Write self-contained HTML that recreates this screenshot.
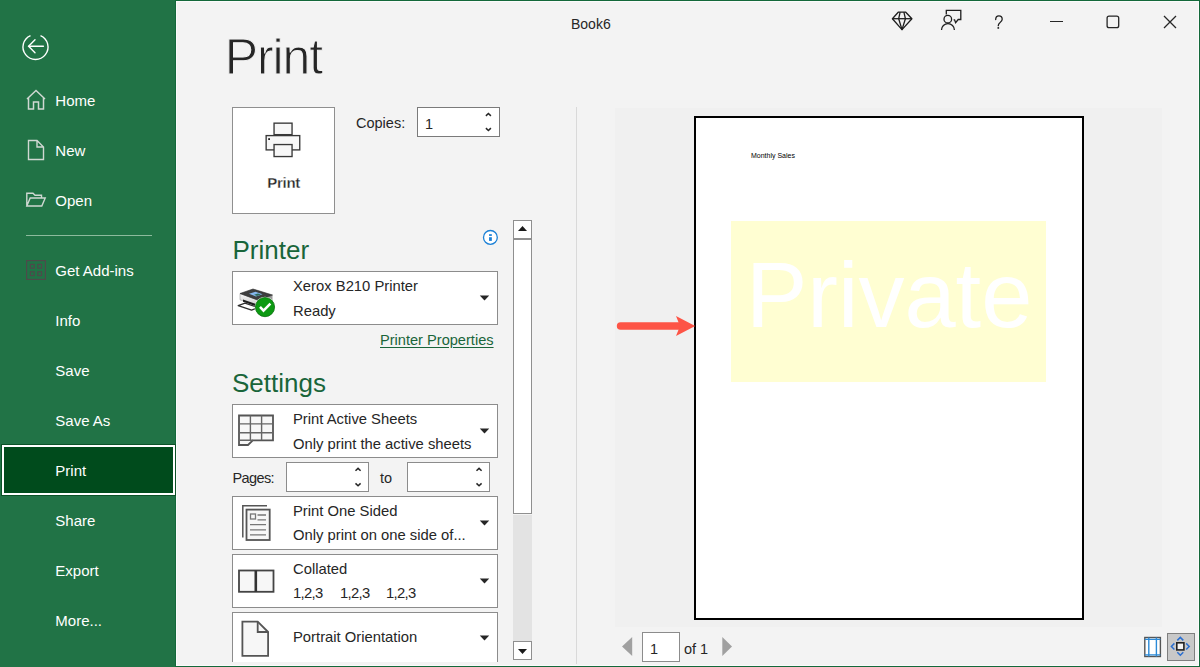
<!DOCTYPE html>
<html><head><meta charset="utf-8"><title>Print</title>
<style>
html,body{margin:0;padding:0;}
body{width:1200px;height:667px;position:relative;overflow:hidden;background:#f3f3f3;font-family:"Liberation Sans", sans-serif;}
.t{position:absolute;white-space:nowrap;font-family:"Liberation Sans", sans-serif;}
.r{position:absolute;}
svg.r{overflow:visible;}
</style></head><body>
<div class="r" style="left:0px;top:0px;width:175px;height:667px;background:#217346"></div>
<div class="r" style="left:175px;top:0px;width:1025px;height:667px;background:#13683a"></div>
<div class="r" style="left:176px;top:1px;width:1023px;height:665px;background:#fbfbfb"></div>
<div class="r" style="left:177px;top:2px;width:1021px;height:663px;background:#f3f3f3"></div>
<svg class="r" style="left:18px;top:30px;" width="36" height="36" viewBox="0 0 36 36"><path d="M 22.5 5.54 A 12.5 12.5 0 1 1 12.5 5.54" fill="none" stroke="#fff" stroke-width="1.4"/><g fill="none" stroke="#fff" stroke-width="1.4" stroke-linecap="round"><path d="M10.8 16.3 H25.4"/><path d="M17 9.8 L10.6 16.3 L17 22.8"/></g></svg>
<div class="r" style="left:1px;top:444px;width:175px;height:52px;background:#0b5127"></div>
<div class="r" style="left:2px;top:445px;width:173px;height:50px;background:#fff"></div>
<div class="r" style="left:4px;top:447px;width:169px;height:46px;background:#004b1c"></div>
<div class="t" style="left:55.3px;top:93.00px;font-size:15px;line-height:15px;color:#fff;">Home</div>
<div class="t" style="left:55.3px;top:143.00px;font-size:15px;line-height:15px;color:#fff;">New</div>
<div class="t" style="left:55.3px;top:193.00px;font-size:15px;line-height:15px;color:#fff;">Open</div>
<div class="t" style="left:55.3px;top:263.00px;font-size:15px;line-height:15px;color:#fff;">Get Add-ins</div>
<div class="t" style="left:55.3px;top:313.00px;font-size:15px;line-height:15px;color:#fff;">Info</div>
<div class="t" style="left:55.3px;top:363.00px;font-size:15px;line-height:15px;color:#fff;">Save</div>
<div class="t" style="left:55.3px;top:413.00px;font-size:15px;line-height:15px;color:#fff;">Save As</div>
<div class="t" style="left:55.3px;top:463.00px;font-size:15px;line-height:15px;color:#fff;">Print</div>
<div class="t" style="left:55.3px;top:513.00px;font-size:15px;line-height:15px;color:#fff;">Share</div>
<div class="t" style="left:55.3px;top:563.00px;font-size:15px;line-height:15px;color:#fff;">Export</div>
<div class="t" style="left:55.3px;top:613.00px;font-size:15px;line-height:15px;color:#fff;">More...</div>
<svg class="r" style="left:24px;top:88px;" width="24" height="24" viewBox="0 0 24 24"><path d="M3 11.5 L12 3 L21 11.5 M4.5 10 V21.5 H9.5 V14.5 H14.5 V21.5 H19.5 V10" fill="none" stroke="#cfd8d2" stroke-width="1.5" transform="translate(0,-0.5)"/></svg>
<svg class="r" style="left:24px;top:138px;" width="24" height="24" viewBox="0 0 24 24"><path d="M4.5 2.5 H13 L19.5 9 V21.5 H4.5 Z M13 2.5 V9 H19.5" fill="none" stroke="#cfd8d2" stroke-width="1.4"/></svg>
<svg class="r" style="left:24px;top:188px;" width="24" height="24" viewBox="0 0 24 24"><path d="M2.8 18 V5.2 H9 L11 7.2 H17.5 V10 M2.8 18 L6.2 10 H21.2 L17.8 18 Z" fill="none" stroke="#cfd8d2" stroke-width="1.4"/></svg>
<div class="r" style="left:26px;top:235px;width:126px;height:1px;background:#8dbb9d"></div>
<svg class="r" style="left:24px;top:258px;" width="24" height="24" viewBox="0 0 24 24"><g fill="none" stroke="#4d4a4a" stroke-width="1.2"><rect x="2.6" y="2.6" width="18.8" height="18.8"/><rect x="6.4" y="6.4" width="3.8" height="3.8"/><rect x="13.8" y="6.4" width="3.8" height="3.8"/><rect x="6.4" y="13.8" width="3.8" height="3.8"/><rect x="13.8" y="13.8" width="3.8" height="3.8"/></g></svg>
<div class="t" style="left:571px;top:17.00px;font-size:14px;line-height:14px;color:#262626;">Book6</div>
<svg class="r" style="left:890px;top:10px;" width="24" height="24" viewBox="0 0 24 24"><g fill="none" stroke="#1e1e1e" stroke-width="1.3" stroke-linejoin="round"><path d="M8.2 2.2 H15.8 L21.9 8.7 L12 19.6 L2.4 8.7 Z"/><path d="M2.4 8.7 H21.9"/><path d="M10.1 2.2 L8.7 8.7 L12 19.6 L15.4 8.7 L13.9 2.2"/></g></svg>
<svg class="r" style="left:938px;top:8px;" width="26" height="26" viewBox="0 0 26 26"><g fill="none" stroke="#1e1e1e" stroke-width="1.3"><path d="M8.3 6.4 V2.4 H22.8 V11.5 H20.2 L17.6 14.6 L16.6 11.8 H15.6"/><circle cx="9.8" cy="11.2" r="3.8"/><path d="M3.5 22 A 6.45 6.45 0 0 1 16.4 22"/></g></svg>
<svg class="r" style="left:990px;top:12px;" width="18" height="20" viewBox="0 0 18 20"><path d="M5.7 7.5 C5.7 5.2 7.1 3.9 8.9 3.9 C10.7 3.9 12.2 5.2 12.2 7.2 C12.2 9.9 8.3 10.8 8.3 13.4 V13.7" fill="none" stroke="#1e1e1e" stroke-width="1.3" stroke-linecap="round"/><circle cx="8.3" cy="15.9" r="0.95" fill="#1e1e1e"/></svg>
<div class="r" style="left:1050px;top:21px;width:13px;height:1px;background:#262626"></div>
<svg class="r" style="left:1104px;top:13px;" width="18" height="18" viewBox="0 0 18 18"><rect x="3.1" y="3.1" width="11.6" height="11.6" rx="2" fill="none" stroke="#262626" stroke-width="1.3"/></svg>
<svg class="r" style="left:1161px;top:13px;" width="18" height="18" viewBox="0 0 18 18"><path d="M3 3 L15 15 M15 3 L3 15" stroke="#262626" stroke-width="1.3"/></svg>
<div class="t" style="left:224.8px;top:32.00px;font-size:50px;line-height:50px;color:#262626;-webkit-text-stroke:1px #f3f3f3;letter-spacing:-1.1px;">Print</div>
<div class="r" style="left:232px;top:107px;width:103px;height:107px;background:#8f8f8f"></div>
<div class="r" style="left:233px;top:108px;width:101px;height:105px;background:#fff"></div>
<svg class="r" style="left:262px;top:119px;" width="42" height="42" viewBox="0 0 42 42"><g fill="#f7f7f7" stroke="#383838" stroke-width="1.35"><rect x="12.05" y="4.15" width="18" height="11.5"/><rect x="4.15" y="16.6" width="33.6" height="14.3"/><rect x="12.05" y="25.55" width="18" height="12"/></g><rect x="6.2" y="19.2" width="1.8" height="1.8" fill="#222"/></svg>
<div class="t" style="left:267.3px;top:175.00px;font-size:15px;line-height:15px;color:#262626;font-weight:bold;letter-spacing:-0.3px;-webkit-text-stroke:0.3px #fff;">Print</div>
<div class="t" style="left:356px;top:116.00px;font-size:14.5px;line-height:14.5px;color:#262626;">Copies:</div>
<div class="r" style="left:417px;top:107px;width:83px;height:30px;background:#7a7a7a"></div>
<div class="r" style="left:418px;top:108px;width:81px;height:28px;background:#fff"></div>
<div class="t" style="left:425px;top:117.00px;font-size:14.5px;line-height:14.5px;color:#262626;">1</div>
<svg class="r" style="left:482px;top:109px;" width="14" height="26" viewBox="0 0 14 26"><g fill="none" stroke="#262626" stroke-width="1.5"><path d="M3.9 6.9 L6.4 4.5 L8.9 6.9"/><path d="M3.9 19.1 L6.4 21.5 L8.9 19.1"/></g></svg>
<div class="r" style="left:576px;top:107px;width:1px;height:557px;background:#d9d9d9"></div>
<div class="t" style="left:232.5px;top:237.00px;font-size:26px;line-height:26px;color:#19653a;">Printer</div>
<svg class="r" style="left:482px;top:229px;" width="17" height="17" viewBox="0 0 17 17"><circle cx="8.4" cy="8.4" r="6.9" fill="#fff" stroke="#1b80d6" stroke-width="1.3"/><rect x="7.05" y="8.2" width="2.8" height="3.7" fill="#1b80d6"/><rect x="7.05" y="5.2" width="2.8" height="1.7" fill="#1b80d6"/></svg>
<div class="r" style="left:232px;top:271px;width:266px;height:54px;background:#8c8c8c"></div>
<div class="r" style="left:233px;top:272px;width:264px;height:52px;background:#fff"></div>
<svg class="r" style="left:479px;top:293px;" width="12" height="10" viewBox="0 0 12 10"><path d="M0.8 2.5 H10.2 L5.5 7.5 Z" fill="#262626"/></svg>
<svg class="r" style="left:236px;top:284px;" width="42" height="34" viewBox="0 0 42 34"><defs><linearGradient id="pf" x1="0" y1="0" x2="0" y2="1"><stop offset="0" stop-color="#fafafa"/><stop offset="1" stop-color="#c8c8c8"/></linearGradient></defs><path d="M4 9.5 L23 16.5 L23 22.5 L4 15.8 Z" fill="url(#pf)" stroke="#9a9a9a" stroke-width="0.6"/><path d="M36.5 11 V16.5 L23 22.5 V16.5 Z" fill="#9c9c9c"/><path d="M4 9.5 L17 5 L36.5 11 L23 16.5 Z" fill="#3e3e3e" stroke="#2a2a2a" stroke-width="0.6"/><path d="M13 9.8 L19.5 7.8 L26.5 10.3 L20 12.6 Z" fill="#86b8ee"/><path d="M18 10.8 L22 9.6 L25 10.6 L21 12 Z" fill="#2f6a5a"/><path d="M7 15.6 L21 20.4 V22.6 L7 17.8 Z" fill="#1e1e1e"/><path d="M2.2 21.6 L9 19.2 L22 23.6 L15.6 26.2 Z" fill="#fff" stroke="#2e2e2e" stroke-width="1.3" stroke-linejoin="round"/><circle cx="29" cy="23.1" r="10.3" fill="#fff"/><circle cx="29" cy="23.1" r="9.6" fill="#0c9a12" stroke="#0a6d0d" stroke-width="0.8"/><path d="M24 22.9 L27.5 26.7 L34.4 19.6" fill="none" stroke="#fff" stroke-width="2.5"/></svg>
<div class="t" style="left:293px;top:279.00px;font-size:14.8px;line-height:14.8px;color:#262626;">Xerox B210 Printer</div>
<div class="t" style="left:293px;top:304.00px;font-size:14.8px;line-height:14.8px;color:#262626;">Ready</div>
<div class="t" style="left:380px;top:333.00px;font-size:14.6px;line-height:14.6px;color:#19653a;text-decoration:underline;text-underline-offset:1.5px;">Printer Properties</div>
<div class="t" style="left:232px;top:370.00px;font-size:26px;line-height:26px;color:#19653a;">Settings</div>
<div class="r" style="left:232px;top:404px;width:266px;height:54px;background:#8c8c8c"></div>
<div class="r" style="left:233px;top:405px;width:264px;height:52px;background:#fff"></div>
<svg class="r" style="left:479px;top:426px;" width="12" height="10" viewBox="0 0 12 10"><path d="M0.8 2.5 H10.2 L5.5 7.5 Z" fill="#262626"/></svg>
<svg class="r" style="left:236px;top:412px;" width="40" height="36" viewBox="0 0 40 36"><g fill="#f7f7f7" stroke="#555" stroke-width="1.8"><path d="M3 3.5 H37 V28.3 H16.8 L12 33 H3 Z"/></g><g stroke="#666" stroke-width="1.4"><path d="M14.4 3.5 V28.3 M25.6 3.5 V28.3 M3 11.9 H37 M3 20.7 H37 M3 28.3 H16.8"/></g></svg>
<div class="t" style="left:293px;top:412.00px;font-size:14.8px;line-height:14.8px;color:#262626;">Print Active Sheets</div>
<div class="t" style="left:293px;top:437.00px;font-size:14.8px;line-height:14.8px;color:#262626;">Only print the active sheets</div>
<div class="t" style="left:232.5px;top:471.00px;font-size:14.5px;line-height:14.5px;color:#262626;letter-spacing:-0.6px;">Pages:</div>
<div class="r" style="left:286px;top:462px;width:83px;height:30px;background:#8c8c8c"></div>
<div class="r" style="left:287px;top:463px;width:81px;height:28px;background:#fff"></div>
<svg class="r" style="left:350.5px;top:464px;" width="14" height="26" viewBox="0 0 14 26"><g fill="none" stroke="#262626" stroke-width="1.5"><path d="M4.5 6.8 L7.05 4.4 L9.6 6.8"/><path d="M4.5 19.4 L7.05 21.8 L9.6 19.4"/></g></svg>
<div class="r" style="left:407px;top:462px;width:83px;height:30px;background:#8c8c8c"></div>
<div class="r" style="left:408px;top:463px;width:81px;height:28px;background:#fff"></div>
<svg class="r" style="left:471.5px;top:464px;" width="14" height="26" viewBox="0 0 14 26"><g fill="none" stroke="#262626" stroke-width="1.5"><path d="M4.5 6.8 L7.05 4.4 L9.6 6.8"/><path d="M4.5 19.4 L7.05 21.8 L9.6 19.4"/></g></svg>
<div class="t" style="left:380px;top:471.00px;font-size:14.5px;line-height:14.5px;color:#262626;">to</div>
<div class="r" style="left:232px;top:496px;width:266px;height:54px;background:#8c8c8c"></div>
<div class="r" style="left:233px;top:497px;width:264px;height:52px;background:#fff"></div>
<svg class="r" style="left:479px;top:518px;" width="12" height="10" viewBox="0 0 12 10"><path d="M0.8 2.5 H10.2 L5.5 7.5 Z" fill="#262626"/></svg>
<svg class="r" style="left:236px;top:500px;" width="40" height="44" viewBox="0 0 40 44"><g fill="none" stroke="#555" stroke-width="1.5"><path d="M6.8 37.4 V5.7 H31"/></g><rect x="10.5" y="9.6" width="23.2" height="30.4" fill="#f7f7f7" stroke="#555" stroke-width="1.8"/><g stroke="#777" stroke-width="1.3"><rect x="14.5" y="14" width="5" height="5" fill="none"/><path d="M21.5 15 H30 M21.5 19.9 H30 M14 24.7 H30 M14 29.8 H30 M14 34.8 H30"/></g></svg>
<div class="t" style="left:293px;top:504.00px;font-size:14.8px;line-height:14.8px;color:#262626;">Print One Sided</div>
<div class="t" style="left:293px;top:528.00px;font-size:14.8px;line-height:14.8px;color:#262626;">Only print on one side of...</div>
<div class="r" style="left:232px;top:554px;width:266px;height:54px;background:#8c8c8c"></div>
<div class="r" style="left:233px;top:555px;width:264px;height:52px;background:#fff"></div>
<svg class="r" style="left:479px;top:576px;" width="12" height="10" viewBox="0 0 12 10"><path d="M0.8 2.5 H10.2 L5.5 7.5 Z" fill="#262626"/></svg>
<svg class="r" style="left:236px;top:566px;" width="40" height="30" viewBox="0 0 40 30"><rect x="3" y="4.5" width="34.5" height="21.3" fill="#f7f7f7" stroke="#444" stroke-width="1.8"/><path d="M19.8 4.5 V25.8" stroke="#333" stroke-width="2.6"/></svg>
<div class="t" style="left:293px;top:562.00px;font-size:14.8px;line-height:14.8px;color:#262626;">Collated</div>
<div class="t" style="left:293px;top:586.00px;font-size:14.8px;line-height:14.8px;color:#262626;letter-spacing:-0.7px;">1,2,3</div>
<div class="t" style="left:340px;top:586.00px;font-size:14.8px;line-height:14.8px;color:#262626;letter-spacing:-0.7px;">1,2,3</div>
<div class="t" style="left:386px;top:586.00px;font-size:14.8px;line-height:14.8px;color:#262626;letter-spacing:-0.7px;">1,2,3</div>
<div class="r" style="left:232px;top:612px;width:266px;height:50px;overflow:hidden">
<div class="r" style="left:0;top:0;width:266px;height:60px;background:#8c8c8c"></div><div class="r" style="left:1px;top:1px;width:264px;height:58px;background:#fff"></div>
</div>
<svg class="r" style="left:236px;top:617px;" width="40" height="44" viewBox="0 0 40 44"><path d="M6.4 4.7 H21.7 L32.1 15 V38.9 H6.4 Z" fill="#f7f7f7" stroke="#555" stroke-width="1.8"/><path d="M21.7 4.7 V15 H32.1" fill="none" stroke="#555" stroke-width="1.8"/></svg>
<div class="t" style="left:293px;top:630.00px;font-size:14.8px;line-height:14.8px;color:#262626;">Portrait Orientation</div>
<svg class="r" style="left:479px;top:633px;" width="12" height="10" viewBox="0 0 12 10"><path d="M0.8 2.5 H10.2 L5.5 7.5 Z" fill="#262626"/></svg>
<div class="r" style="left:513px;top:220px;width:19px;height:440px;background:#8f8f8f"></div>
<div class="r" style="left:514px;top:221px;width:17px;height:17px;background:#fff"></div>
<div class="r" style="left:514px;top:240px;width:17px;height:273px;background:#fff"></div>
<div class="r" style="left:513px;top:514px;width:19px;height:127px;background:#f3f3f3"></div>
<div class="r" style="left:513px;top:515px;width:19px;height:126px;background:#e3e3e3"></div>
<div class="r" style="left:514px;top:642px;width:17px;height:17px;background:#fff"></div>
<svg class="r" style="left:513px;top:220px;" width="19" height="19" viewBox="0 0 19 19"><path d="M5 11 H14 L9.5 6 Z" fill="#1a1a1a"/></svg>
<svg class="r" style="left:513px;top:641px;" width="19" height="19" viewBox="0 0 19 19"><path d="M5 8 H14 L9.5 13 Z" fill="#1a1a1a"/></svg>
<div class="r" style="left:615px;top:108px;width:547px;height:519px;background:#f0f0f0"></div>
<div class="r" style="left:694px;top:116px;width:390px;height:504px;background:#000"></div>
<div class="r" style="left:696px;top:118px;width:386px;height:500px;background:#fff"></div>
<div class="t" style="left:751px;top:152.00px;font-size:7px;line-height:7px;color:#000;">Monthly Sales</div>
<div class="r" style="left:731px;top:221px;width:315px;height:161px;background:#fffed2"></div>
<div class="t" style="left:746px;top:249.00px;font-size:92px;line-height:92px;color:#fff;">Private</div>
<svg class="r" style="left:612px;top:310px;" width="90" height="32" viewBox="0 0 90 32"><path d="M8.6 16 H70" stroke="#fd5446" stroke-width="7.6" stroke-linecap="round"/><path d="M64 6.1 L83.2 16 L64 25.9 L68 16 Z" fill="#fd5446"/></svg>
<svg class="r" style="left:618px;top:634px;" width="18" height="26" viewBox="0 0 18 26"><path d="M14.2 2.9 V21.9 L4 12.4 Z" fill="#a0a0a0"/></svg>
<div class="r" style="left:642px;top:632px;width:38px;height:30px;background:#8c8c8c"></div>
<div class="r" style="left:643px;top:633px;width:36px;height:28px;background:#fff"></div>
<div class="t" style="left:650px;top:642.00px;font-size:14.5px;line-height:14.5px;color:#262626;">1</div>
<div class="t" style="left:684px;top:642.00px;font-size:14.5px;line-height:14.5px;color:#262626;">of 1</div>
<svg class="r" style="left:718px;top:634px;" width="18" height="26" viewBox="0 0 18 26"><path d="M4.3 2.9 V21.9 L14 12.4 Z" fill="#a0a0a0"/></svg>
<svg class="r" style="left:1142px;top:635px;" width="22" height="24" viewBox="0 0 22 24"><rect x="2.8" y="2.5" width="15.6" height="19" fill="#fff" stroke="#555" stroke-width="1.4"/><path d="M6.8 2.5 V21.5 M14.4 2.5 V21.5 M2.8 4.4 H18.4 M2.8 19.9 H18.4" stroke="#2b8ad8" stroke-width="1.4"/></svg>
<div class="r" style="left:1167px;top:633px;width:28px;height:28px;background:#7f7f7f"></div>
<div class="r" style="left:1168px;top:634px;width:26px;height:26px;background:#c8c8c8"></div>
<svg class="r" style="left:1167px;top:633px;" width="28" height="28" viewBox="0 0 28 28"><rect x="9.8" y="9.8" width="7.1" height="7.1" fill="#f5f5f5" stroke="#222" stroke-width="1.6"/><g fill="none" stroke="#2b6fd0" stroke-width="1.5"><path d="M10.3 7.4 L13.3 4.4 L16.3 7.4"/><path d="M10.3 19.2 L13.3 22.2 L16.3 19.2"/><path d="M7.4 10.4 L4.4 13.4 L7.4 16.5"/><path d="M19.2 10.4 L22.2 13.4 L19.2 16.5"/></g></svg>
</body></html>
